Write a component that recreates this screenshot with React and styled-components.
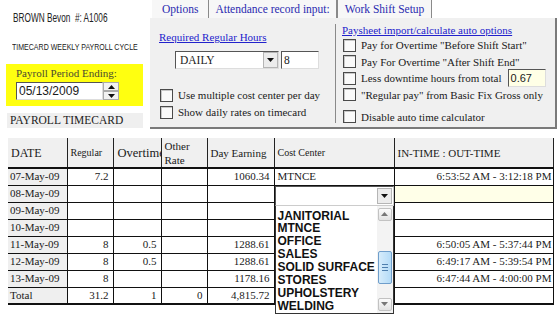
import React from 'react'
import styled, { createGlobalStyle } from 'styled-components'

const GlobalStyle = createGlobalStyle`
  html, body { margin:0; padding:0; background:#fff; }
  body {
    font-family:"Liberation Serif", "Times New Roman", serif;
    font-size:11px;
    color:#1a1a1a;
  }
  * { box-sizing:border-box; }
`

const rows = [
  { date: '07-May-09', reg: '7.2', earn: '1060.34', cc: 'MTNCE', time: '6:53:52 AM - 3:12:18 PM' },
  { date: '08-May-09', editing: true },
  { date: '09-May-09' },
  { date: '10-May-09' },
  { date: '11-May-09', reg: '8', ot: '0.5', earn: '1288.61', time: '6:50:05 AM - 5:37:44 PM' },
  { date: '12-May-09', reg: '8', ot: '0.5', earn: '1288.61', time: '6:49:17 AM - 5:39:54 PM' },
  { date: '13-May-09', reg: '8', earn: '1178.16', time: '6:47:44 AM - 4:00:00 PM' },
]

const costCenters = ['JANITORIAL', 'MTNCE', 'OFFICE', 'SALES', 'SOLID SURFACE', 'STORES', 'UPHOLSTERY', 'WELDING']

const colWidths = [59, 46, 48, 46, 67, 120, 159]

function Arrow({ up }) {
  return (
    <svg width="7" height="4" viewBox="0 0 7 4">
      <polygon points={up ? '0,4 7,4 3.5,0' : '0,0 7,0 3.5,4'} fill="#111" />
    </svg>
  )
}

function Checkbox({ label }) {
  return (
    <CheckRow>
      <Box />
      <span>{label}</span>
    </CheckRow>
  )
}

export default function App() {
  return (
    <Page>
      <GlobalStyle />
      <Top>
        <LeftInfo>
          <OwnerName>BROWN Bevon &nbsp;#: A1006</OwnerName>
          <CycleLabel>TIMECARD WEEKLY PAYROLL CYCLE</CycleLabel>
          <PeriodBox>
            <PeriodLabel>Payroll Period Ending:</PeriodLabel>
            <DateRow>
              <DateInput>05/13/2009</DateInput>
              <Spinner>
                <SpinBtn><Arrow up /></SpinBtn>
                <SpinBtn><Arrow /></SpinBtn>
              </Spinner>
            </DateRow>
          </PeriodBox>
          <TitleBar>PAYROLL TIMECARD</TitleBar>
        </LeftInfo>

        <OptionsPanel>
          <TabStrip>
            <Tab $pad={10}>Options</Tab>
            <Tab $pad={6}>Attendance record input:</Tab>
            <Tab $pad={7} $left>Work Shift Setup</Tab>
          </TabStrip>
          <PanelBody>
            <HoursSection>
              <SectionLink>Required Regular Hours</SectionLink>
              <HoursRow>
                <SelectBox $w={104}>
                  <SelectText>DAILY</SelectText>
                  <DropBtn><Arrow /></DropBtn>
                </SelectBox>
                <TextInput $w={38}>8</TextInput>
              </HoursRow>
              <CheckList $gap={3} $top={19}>
                <Checkbox label="Use multiple cost center per day" />
                <Checkbox label="Show daily rates on timecard" />
              </CheckList>
            </HoursSection>
            <AutoSection>
              <SectionLink>Paysheet import/calculate auto options</SectionLink>
              <CheckList $gap={2.5} $top={1}>
                <Checkbox label={'Pay for Overtime "Before Shift Start"'} />
                <Checkbox label={'Pay For Overtime "After Shift End"'} />
                <CheckRow>
                  <Box />
                  <span>Less downtime hours from total</span>
                  <SmallInput>0.67</SmallInput>
                </CheckRow>
                <Checkbox label={'"Regular pay" from Basic Fix Gross only'} />
                <Spacer />
                <Checkbox label="Disable auto time calculator" />
              </CheckList>
            </AutoSection>
          </PanelBody>
        </OptionsPanel>
      </Top>

      <Table>
        <colgroup>
          {colWidths.map((w, i) => <Col key={i} $w={w} />)}
        </colgroup>
        <thead>
          <tr>
            <Th $size={12}>DATE</Th>
            <Th $size={10}>Regular</Th>
            <Th $size={12.5} $pad={4}>Overtime</Th>
            <Th>Other<br />Rate</Th>
            <Th>Day Earning</Th>
            <Th $size={10}>Cost Center</Th>
            <Th $last>IN-TIME : OUT-TIME</Th>
          </tr>
        </thead>
        <tbody>
          {rows.map(r => (
            <tr key={r.date}>
              <DateCell>{r.date}</DateCell>
              <NumCell>{r.reg}</NumCell>
              <NumCell>{r.ot}</NumCell>
              <NumCell>{r.other}</NumCell>
              <NumCell>{r.earn}</NumCell>
              {r.editing ? (
                <CostCell>
                  <Combo>
                    <ComboBox>
                      <DropBtn><Arrow /></DropBtn>
                    </ComboBox>
                    <ListBox>
                      <Items>
                        {costCenters.map(c => <Item key={c}>{c}</Item>)}
                      </Items>
                      <ScrollBar>
                        <ScrollBtn><Arrow up /></ScrollBtn>
                        <Thumb><Grip /><Grip /><Grip /></Thumb>
                        <ScrollBtn $bottom><Arrow /></ScrollBtn>
                      </ScrollBar>
                    </ListBox>
                  </Combo>
                </CostCell>
              ) : (
                <CostCell>{r.cc}</CostCell>
              )}
              <TimeCell $edit={r.editing}>{r.time}</TimeCell>
            </tr>
          ))}
          <TotalRow>
            <DateCell>Total</DateCell>
            <NumCell>31.2</NumCell>
            <NumCell>1</NumCell>
            <NumCell>0</NumCell>
            <NumCell>4,815.72</NumCell>
            <CostCell />
            <TimeCell />
          </TotalRow>
        </tbody>
      </Table>
    </Page>
  )
}

const Page = styled.div`
  width:560px;
  height:336px;
  overflow:hidden;
  background:#fff;
`

const Top = styled.div`
  display:flex;
  height:136px;
`

const LeftInfo = styled.div`
  width:150px;
  display:flex;
  flex-direction:column;
`

const narrow = `
  font-family:"Liberation Sans", Arial, sans-serif;
  transform-origin:left center;
  white-space:nowrap;
  color:#222;
`

const OwnerName = styled.div`
  ${narrow}
  margin:12px 0 0 13px;
  height:12px;
  line-height:12px;
  font-size:12.5px;
  transform:scaleX(0.66);
`

const CycleLabel = styled.div`
  ${narrow}
  margin:18px 0 0 12px;
  height:10px;
  line-height:10px;
  font-size:9.5px;
  transform:scaleX(0.74);
`

const PeriodBox = styled.div`
  margin:12px 0 0 6px;
  width:137px;
  height:42px;
  background:#ffff10;
  padding:3px 0 0 10px;
`

const PeriodLabel = styled.div`
  font-size:11px;
  line-height:12px;
  color:#4a4a30;
`

const DateRow = styled.div`
  display:flex;
  margin-top:3px;
`

const DateInput = styled.div`
  width:87px;
  height:18px;
  background:#fff;
  border-top:1px solid #555;
  border-left:1px solid #555;
  border-bottom:1px solid #ddd;
  border-right:1px solid #ddd;
  font-family:"Liberation Sans", Arial, sans-serif;
  font-size:12px;
  line-height:16px;
  padding-left:2px;
`

const Spinner = styled.div`
  display:flex;
  flex-direction:column;
  width:16px;
  height:18px;
`

const SpinBtn = styled.div`
  flex:1;
  display:flex;
  align-items:center;
  justify-content:center;
  background:#f2f2f2;
  border:1px solid #aaa;
`

const TitleBar = styled.div`
  margin:7px 0 0 7px;
  width:136px;
  height:15px;
  background:#efefef;
  padding-left:3px;
  font-size:11.5px;
  line-height:15px;
  color:#222;
`

const OptionsPanel = styled.div`
  width:407px;
  display:flex;
  flex-direction:column;
`

const TabStrip = styled.div`
  display:flex;
  height:18px;
  padding-left:2px;
`

const Tab = styled.div`
  padding:0 ${p => p.$pad}px;
  border-right:1px solid #8a8a8a;
  border-left:${p => (p.$left ? '1px solid #8a8a8a' : 'none')};
  color:#2a2ab0;
  font-size:11.5px;
  line-height:18px;
  background:#f7f7f7;
`

const PanelBody = styled.div`
  display:flex;
  height:111px;
  background:#f0f0f0;
  border-right:2px solid #7a7a7a;
  border-bottom:2px solid #7a7a7a;
`

const HoursSection = styled.div`
  width:185px;
  padding:13px 0 0 9px;
`

const AutoSection = styled.div`
  flex:1;
  margin:6px 0 4px;
  border-left:1px solid #8a8a8a;
  padding:0 0 0 6px;
`

const SectionLink = styled.div`
  color:#2222cc;
  text-decoration:underline;
  font-size:11px;
  line-height:13px;
`

const HoursRow = styled.div`
  display:flex;
  gap:2px;
  margin:7px 0 0 16px;
`

const SelectBox = styled.div`
  display:flex;
  width:${p => p.$w}px;
  height:18px;
  background:#fff;
  border-top:1px solid #555;
  border-left:1px solid #555;
  border-bottom:1px solid #ddd;
  border-right:1px solid #ddd;
`

const SelectText = styled.div`
  flex:1;
  padding-left:4px;
  font-size:11.5px;
  line-height:16px;
`

const DropBtn = styled.div`
  width:15px;
  display:flex;
  align-items:center;
  justify-content:center;
  background:#ececec;
  border:1px solid #b5b5b5;
`

const TextInput = styled.div`
  width:${p => p.$w}px;
  height:18px;
  background:#fff;
  border-top:1px solid #555;
  border-left:1px solid #555;
  border-bottom:1px solid #ddd;
  border-right:1px solid #ddd;
  padding-left:2px;
  font-size:11.5px;
  line-height:16px;
`

const CheckList = styled.div`
  display:flex;
  flex-direction:column;
  gap:${p => p.$gap}px;
  margin-top:${p => p.$top}px;
`

const CheckRow = styled.div`
  display:flex;
  align-items:center;
  gap:5px;
  height:14px;
  font-size:11px;
  white-space:nowrap;
`

const Box = styled.span`
  width:13px;
  height:13px;
  flex:none;
  margin-left:1px;
  background:#fafafa;
  border:1px solid #4a4a4a;
  box-shadow:inset 1px 1px 0 #c8c8c8;
`

const SmallInput = styled.div`
  width:38px;
  height:18px;
  margin-left:1px;
  background:#ffffe6;
  border-top:1px solid #555;
  border-left:1px solid #555;
  border-bottom:1px solid #ddd;
  border-right:1px solid #ddd;
  font-family:"Liberation Sans", Arial, sans-serif;
  font-size:11px;
  line-height:16px;
  padding-left:2px;
`

const Spacer = styled.div`
  height:3px;
`

const Table = styled.table`
  margin:2px 0 0 8px;
  width:545px;
  table-layout:fixed;
  border-collapse:collapse;
`

const Col = styled.col`
  width:${p => p.$w}px;
`

const Th = styled.th`
  height:30px;
  padding:0 3px 0 ${p => p.$pad || 3}px;
  background:#f0f0f0;
  font-weight:normal;
  text-align:left;
  font-size:${p => p.$size || 11}px;
  line-height:14px;
  white-space:nowrap;
  overflow:hidden;
  border-left:1px solid #222;
  border-right:${p => (p.$last ? '1px solid #222' : 'none')};
  border-bottom:2px solid #111;
  &:first-child { border-left:none; }
`

const cellBase = `
  height:17px;
  padding:0 4px;
  border:1px solid #111;
  font-size:11px;
  line-height:13px;
  white-space:nowrap;
  overflow:hidden;
`

const DateCell = styled.td`
  ${cellBase}
  border-left:none;
  padding-left:2px;
  background:#efefef;
`

const NumCell = styled.td`
  ${cellBase}
  text-align:right;
`

const CostCell = styled.td`
  ${cellBase}
  padding-left:3px;
  position:relative;
  overflow:visible;
`

const TimeCell = styled.td`
  ${cellBase}
  text-align:right;
  padding-right:1px;
  background:${p => (p.$edit ? '#ffffe8' : '#fff')};
`

const TotalRow = styled.tr`
  td { border-bottom:2px solid #111; }
`

const Combo = styled.div`
  position:absolute;
  top:0;
  left:0;
  width:119px;
  z-index:2;
`

const ComboBox = styled.div`
  display:flex;
  justify-content:flex-end;
  height:20px;
  background:#fff;
  border-top:1px solid #555;
  border-left:1px solid #555;
  border-bottom:1px solid #ccc;
  border-right:1px solid #ccc;
  padding:1px;
`

const ListBox = styled.div`
  display:flex;
  height:108px;
  background:#fff;
  border:1px solid #333;
  border-top:none;
`

const Items = styled.div`
  flex:1;
  padding:4px 0 0 2px;
`

const Item = styled.div`
  font-family:"Liberation Sans", Arial, sans-serif;
  font-weight:bold;
  font-size:12px;
  line-height:12.9px;
  color:#111;
  white-space:nowrap;
`

const ScrollBar = styled.div`
  width:16px;
  display:flex;
  flex-direction:column;
  background:#f3f3f3;
  padding:2px 1px;
`

const ScrollBtn = styled.div`
  height:13px;
  margin-top:${p => (p.$bottom ? 'auto' : '0')};
  display:flex;
  align-items:center;
  justify-content:center;
  background:linear-gradient(#fbfbfb, #e2e2e2);
  border:1px solid #c2c2c2;
  border-radius:2px;
  svg polygon { fill:#777; }
`

const Thumb = styled.div`
  margin-top:30px;
  height:33px;
  display:flex;
  flex-direction:column;
  align-items:center;
  justify-content:center;
  gap:2px;
  background:linear-gradient(90deg, #d6ecfb, #b4dbf7);
  border:1px solid #6f9ecb;
  border-radius:2px;
`

const Grip = styled.span`
  width:6px;
  height:1px;
  background:#4f7fae;
`
